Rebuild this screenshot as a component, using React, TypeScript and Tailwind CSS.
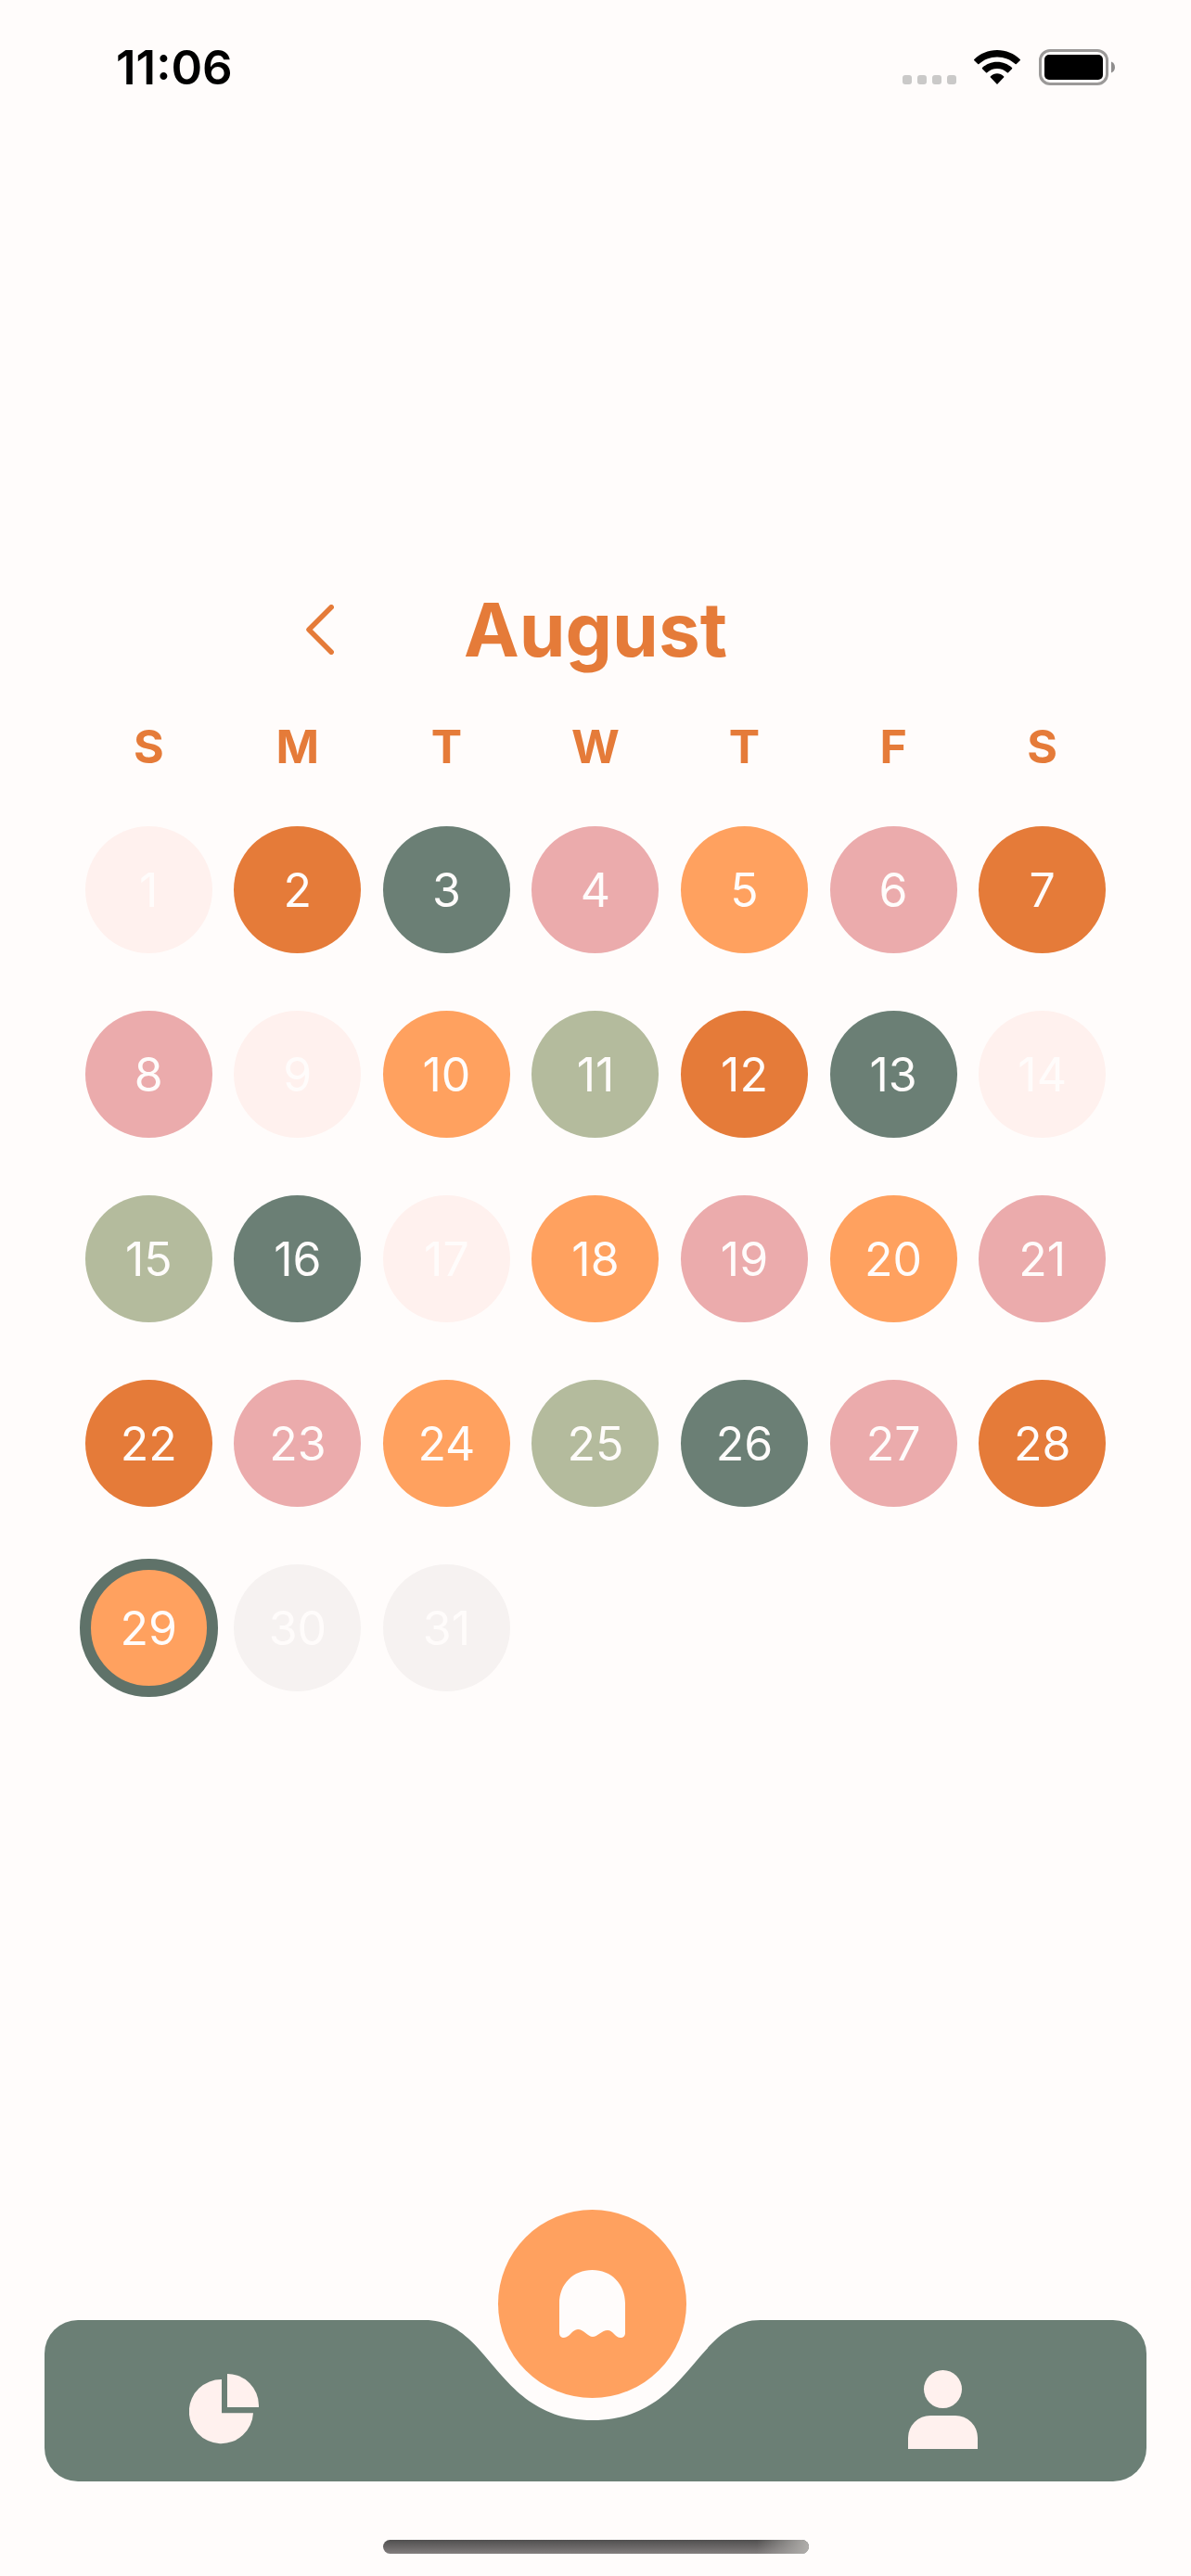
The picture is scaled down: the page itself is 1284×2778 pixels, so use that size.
type Tone = "blush" | "rust" | "pine" | "rose" | "peach" | "sage" | "empty";

const toneClass: Record<Tone, string> = {
  blush: "bg-[#fff1ee]",
  rust: "bg-[#e57b39]",
  pine: "bg-[#6b7f75]",
  rose: "bg-[#ebabac]",
  peach: "bg-[#ffa15f]",
  sage: "bg-[#b4bb9d]",
  empty: "bg-[#f6f2f1]",
};

const weekdays = [
  ["S", "Sunday"],
  ["M", "Monday"],
  ["T", "Tuesday"],
  ["W", "Wednesday"],
  ["T", "Thursday"],
  ["F", "Friday"],
  ["S", "Saturday"],
];

const weeks: Tone[][] = [
  ["blush", "rust", "pine", "rose", "peach", "rose", "rust"],
  ["rose", "blush", "peach", "sage", "rust", "pine", "blush"],
  ["sage", "pine", "blush", "peach", "rose", "peach", "rose"],
  ["rust", "rose", "peach", "sage", "pine", "rose", "rust"],
  ["peach", "empty", "empty"],
];

const today = 29;

function StatusBar() {
  return (
    <header className="flex h-[145px] items-center justify-between pr-[82px] pl-[125px] text-black">
      <time className="text-[51px] leading-none font-semibold">11:06</time>
      <div className="flex items-end">
        <div className="mr-[19px] mb-px flex gap-1.5">
          <span className="size-2.5 rounded-[3px] bg-[#cac9c8]" />
          <span className="size-2.5 rounded-[3px] bg-[#cac9c8]" />
          <span className="size-2.5 rounded-[3px] bg-[#cac9c8]" />
          <span className="size-2.5 rounded-[3px] bg-[#cac9c8]" />
        </div>
        <svg width="50" height="37" viewBox="0 0 50 37" fill="currentColor" className="mr-5 mb-px" aria-label="Wi-Fi">
          <path d="M25 0C34.7 0 43.3 3.8 49.7 9.9Q50.3 10.6 49.7 11.2L45.8 15.1Q45.2 15.6 44.6 15.1C39.5 10.3 32.6 7.5 25 7.5S10.5 10.3 5.4 15.1Q4.8 15.6 4.2 15.1L.3 11.2Q-.3 10.6 .3 9.9C6.7 3.8 15.3 0 25 0Z" />
          <path d="M25 12.8C31.2 12.8 36.8 15.2 41 19Q41.6 19.7 41 20.3L37 24.2Q36.4 24.7 35.8 24.2C32.9 21.6 29.2 20 25 20S17.1 21.6 14.2 24.2Q13.6 24.7 13 24.2L9 20.3Q8.4 19.7 9 19C13.2 15.2 18.8 12.8 25 12.8Z" />
          <path d="M25 25.3C27.6 25.3 30.1 26.3 32.1 28.2Q32.8 28.9 32.1 29.6L25.5 36.5Q25 37 24.5 36.5L17.9 29.6Q17.2 28.9 17.9 28.2C19.9 26.3 22.4 25.3 25 25.3Z" />
        </svg>
        <svg width="82" height="39" viewBox="0 0 82 39" aria-label="Battery full">
          <rect x="1.5" y="1.5" width="72" height="36" rx="10.5" fill="none" stroke="#9b9998" strokeWidth="3" />
          <rect x="6" y="6" width="63" height="27" rx="5" fill="#000" />
          <path d="M78 13.5C83.3 15 83.3 24 78 25.5Z" fill="#8f8d8d" />
        </svg>
      </div>
    </header>
  );
}

function Day({ day, tone }: { day: number; tone: Tone }) {
  const ring = day === today ? "size-[149px] border-[12px] border-[#5f7269]" : "size-[137px]";
  return (
    <button
      type="button"
      aria-current={day === today ? "date" : undefined}
      className={`relative mx-auto flex items-center justify-center rounded-full text-[50px] leading-none text-[#fffcfb] ${ring} ${toneClass[tone]}`}
    >
      {day}
    </button>
  );
}

function Calendar() {
  return (
    <section className="px-20 pt-[484px]">
      <div className="grid h-[100px] grid-cols-3 items-center px-[116px] text-[#e57b39]">
        <button type="button" aria-label="Previous month" className="flex size-20 items-center justify-center justify-self-center">
          <svg width="30" height="54" viewBox="0 0 30 54" fill="none" stroke="currentColor" strokeWidth="5.5" strokeLinecap="round" strokeLinejoin="round">
            <path d="M27.2 2.8L3 27L27.2 51.2" />
          </svg>
        </button>
        <h1 className="justify-self-center text-[80px] leading-none font-bold">August</h1>
      </div>
      <table className="mt-[46px] w-full table-fixed border-collapse">
        <thead>
          <tr className="h-[85px]">
            {weekdays.map(([letter, name]) => (
              <th key={name} scope="col" abbr={name} className="p-0 text-center align-top text-[50px] leading-[60px] font-bold text-[#e57b39]">
                {letter}
              </th>
            ))}
          </tr>
        </thead>
        <tbody>
          {weeks.map((week, row) => (
            <tr key={row} className="h-[199px]">
              {week.map((tone, column) => (
                <td key={column} className="p-0 align-middle">
                  <Day day={row * 7 + column + 1} tone={tone} />
                </td>
              ))}
            </tr>
          ))}
        </tbody>
      </table>
    </section>
  );
}

function TabBar() {
  return (
    <nav className="relative mx-12 mt-auto flex h-[174px] items-center justify-between rounded-[36px] bg-[#6b7f75] pr-[145px] pl-[120px] text-[#fff1ee]">
      <button type="button" aria-label="Statistics" className="flex h-full w-[148px] items-center justify-center pt-[18px]">
        <svg width="76" height="76" viewBox="0 0 76 76" fill="currentColor">
          <path d="M35 6V42.3H69A34.6 34.6 0 1 1 35 6Z" />
          <path d="M41 0A34 34 0 0 1 75 34V36H41Z" />
        </svg>
      </button>
      <button type="button" aria-label="Profile" className="flex h-full w-[148px] items-center justify-center pt-[18px]">
        <svg width="76" height="84" viewBox="0 0 76 84" fill="currentColor" className="overflow-visible">
          <circle cx="37.5" cy="20.5" r="20.5" />
          <path d="M0 85V73A24 24 0 0 1 24 49H51A24 24 0 0 1 75 73V85Z" />
        </svg>
      </button>
      <div className="absolute top-0 left-1/2 -ml-[184px] w-[362px]">
        <svg width="362" height="110" viewBox="0 -2 362 110" className="-mt-0.5" fill="#fffcfb">
          <path d="M0 -2V0C71 0 76 108 181 108S291 0 362 0V-2Z" />
        </svg>
        <button
          type="button"
          aria-label="Home"
          className="absolute -top-[119px] left-[79px] flex size-[203px] items-center justify-center rounded-full bg-[#ffa15f] text-[#fffcfb]"
        >
          <svg width="71" height="73" viewBox="0 0 71 73" fill="currentColor">
            <path d="M0 36C0 15 15 0 35.5 0S71 15 71 36V68C71 71 69 73 66 73C60 73 58 65 52 65C46 65 41 72 36 72C31 72 26 64 20 64C14 64 11 73 5 73C2 73 0 71 0 68Z" />
          </svg>
        </button>
      </div>
    </nav>
  );
}

export default function App() {
  return (
    <div className="flex min-h-screen flex-col bg-[#fffcfb] font-['Inter',sans-serif]">
      <StatusBar />
      <main>
        <Calendar />
      </main>
      <TabBar />
      <div className="mx-auto mt-[63px] mb-6 h-[15px] w-[459px] overflow-hidden rounded-full bg-linear-to-b from-[#504f4f] to-[#837e7e]">
        <div className="ml-auto h-full w-14 bg-linear-to-r from-transparent to-[#b0aeab]" />
      </div>
    </div>
  );
}
